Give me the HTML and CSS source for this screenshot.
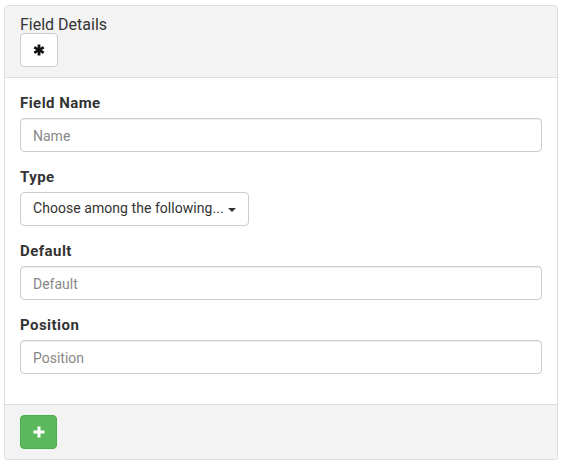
FILE: index.html
```html
<!DOCTYPE html>
<html>
<head>
<meta charset="utf-8">
<link rel="stylesheet" href="styles.css">
</head>
<body>
<div class="panel">
  <div class="panel-heading">
    <h3 class="panel-title">Field Details</h3>
    <button class="btn btn-default btn-icon" type="button">
      <svg width="12" height="12" viewBox="0 0 12 12" aria-hidden="true">
        <g fill="#111">
          <rect x="4.6" y="0.5" width="2.8" height="11" rx="0.3"/>
          <rect x="4.6" y="0.5" width="2.8" height="11" rx="0.3" transform="rotate(60 6 6)"/>
          <rect x="4.6" y="0.5" width="2.8" height="11" rx="0.3" transform="rotate(-60 6 6)"/>
        </g>
      </svg>
    </button>
  </div>
  <div class="panel-body">
    <div class="form-group">
      <label class="control-label">Field Name</label>
      <input class="form-control" type="text" placeholder="Name">
    </div>
    <div class="form-group">
      <label class="control-label">Type</label>
      <div>
        <button class="btn btn-default dropdown-toggle" type="button">Choose among the following... <span class="caret"></span></button>
      </div>
    </div>
    <div class="form-group">
      <label class="control-label">Default</label>
      <input class="form-control" type="text" placeholder="Default">
    </div>
    <div class="form-group">
      <label class="control-label">Position</label>
      <input class="form-control" type="text" placeholder="Position">
    </div>
  </div>
  <div class="panel-footer">
    <button class="btn btn-success btn-icon-sm" type="button">
      <svg width="12" height="12" viewBox="0 0 12 12" aria-hidden="true">
        <g fill="#fff">
          <rect x="4.5" y="0.5" width="3" height="11"/>
          <rect x="0.5" y="4.5" width="11" height="3"/>
        </g>
      </svg>
    </button>
  </div>
</div>
</body>
</html>
```

FILE: styles.css
```css
* { box-sizing: border-box; }
html, body { margin: 0; padding: 0; background: #fff; }
body {
  padding: 5px 6px 0 4px;
  font-family: Roboto, "Liberation Sans", Arial, sans-serif;
  font-size: 14px;
  line-height: 1.42857;
  color: #333;
}
.panel {
  border: 1px solid #ddd;
  border-radius: 4px;
  background: #fff;
  box-shadow: 0 1px 1px rgba(0,0,0,0.05);
}
.panel-heading {
  background: #f3f3f3;
  border-bottom: 1px solid #ddd;
  border-radius: 3px 3px 0 0;
  padding: 10px 15px;
}
.panel-title {
  margin: 0;
  font-size: 16px;
  font-weight: normal;
  line-height: 17px;
  color: #333;
}
.btn {
  display: inline-flex;
  align-items: center;
  justify-content: center;
  height: 34px;
  padding: 6px 12px;
  font-family: inherit;
  font-size: 14px;
  line-height: 1.42857;
  border: 1px solid transparent;
  border-radius: 4px;
  cursor: pointer;
  white-space: nowrap;
}
.btn-default {
  background: #fff;
  border-color: #ccc;
  color: #333;
}
.btn-icon {
  width: 38px;
  padding: 0;
}
.btn-success {
  background: #5cb85c;
  border-color: #4cae4c;
  color: #fff;
}
.btn-icon-sm {
  width: 37px;
  padding: 0;
}
.panel-body { padding: 15px; }
.form-group { margin-bottom: 15px; }
.control-label {
  display: block;
  margin-bottom: 5px;
  padding-top: 1px;
  font-size: 15px;
  line-height: 19px;
  letter-spacing: 0.45px;
  font-weight: bold;
}
.form-control {
  display: block;
  width: 100%;
  height: 34px;
  padding: 7px 12px 5px;
  font-family: inherit;
  font-size: 14px;
  line-height: 1.42857;
  color: #555;
  background: #fff;
  border: 1px solid #ccc;
  border-radius: 4px;
  box-shadow: inset 0 1px 1px rgba(0,0,0,0.075);
  margin: 0;
}
.form-control::placeholder { color: #888; }
.dropdown-toggle {
  gap: 4px;
  letter-spacing: 0.05px;
}
.caret {
  display: inline-block;
  width: 0;
  height: 0;
  border-top: 4px solid #333;
  border-left: 4px solid transparent;
  border-right: 4px solid transparent;
  margin-top: 2px;
}
.panel-footer {
  background: #f3f3f3;
  border-top: 1px solid #ddd;
  border-radius: 0 0 3px 3px;
  padding: 10px 15px;
  display: flex;
}
```
